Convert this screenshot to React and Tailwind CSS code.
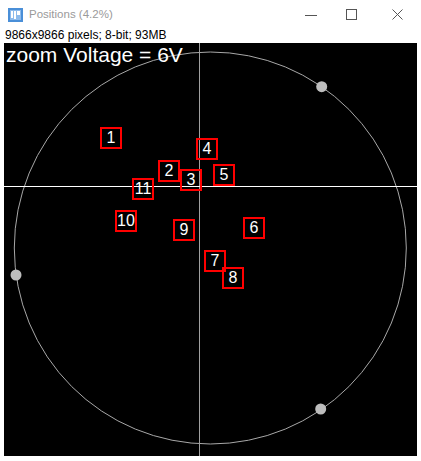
import React from 'react';

const ROIS = [
  { n: '1', x: 96, y: 84 },
  { n: '4', x: 192, y: 95 },
  { n: '2', x: 154, y: 117 },
  { n: '3', x: 176, y: 126 },
  { n: '5', x: 209, y: 121 },
  { n: '11', x: 128, y: 135 },
  { n: '10', x: 111, y: 167 },
  { n: '9', x: 169, y: 176 },
  { n: '6', x: 239, y: 174 },
  { n: '7', x: 200, y: 207 },
  { n: '8', x: 218, y: 224 },
];

function AppIcon() {
  return (
    <svg width="15" height="14" viewBox="0 0 15 14" className="shrink-0">
      <rect x="0" y="0" width="15" height="14" fill="#4a8fd8" />
      <rect x="2" y="2" width="11" height="10" fill="#8dbbec" />
      <rect x="3" y="3" width="2" height="7" fill="#ffffff" />
      <rect x="6" y="3" width="2" height="8" fill="#ffffff" />
      <rect x="9" y="3" width="3" height="4" fill="#ffffff" />
    </svg>
  );
}

function WindowControls() {
  return (
    <div className="ml-auto flex items-center h-full">
      <svg width="12" height="12" viewBox="0 0 12 12" className="mr-[29px]">
        <line x1="0" y1="6.5" x2="12" y2="6.5" stroke="#555" strokeWidth="1" />
      </svg>
      <svg width="11" height="11" viewBox="0 0 11 11" className="mr-[35px]">
        <rect x="0.5" y="0.5" width="10" height="10" fill="none" stroke="#555" strokeWidth="1" />
      </svg>
      <svg width="11" height="11" viewBox="0 0 11 11" className="mr-[18px]">
        <line x1="0.5" y1="0.5" x2="10.5" y2="10.5" stroke="#555" strokeWidth="1" />
        <line x1="10.5" y1="0.5" x2="0.5" y2="10.5" stroke="#555" strokeWidth="1" />
      </svg>
    </div>
  );
}

export default function App() {
  return (
    <div className="w-[421px] h-[461px] bg-white flex flex-col font-['Liberation_Sans',Arial,sans-serif] overflow-hidden">
      {/* title bar */}
      <div className="h-[28px] flex items-center pl-[8px] pt-[1px]">
        <AppIcon />
        <span className="ml-[6px] text-[11.5px] text-[#9a9a9a] leading-none">Positions (4.2%)</span>
        <WindowControls />
      </div>

      {/* info line */}
      <div className="h-[15px] pl-[5px] text-[12px] leading-[15px] text-black">
        9866x9866 pixels; 8-bit; 93MB
      </div>

      {/* image canvas */}
      <div className="ml-[4px] relative w-[413px] h-[413px] bg-black overflow-hidden">
        <svg width="413" height="413" viewBox="0 0 413 413" className="absolute inset-0">
          <circle cx="206.3" cy="205" r="196" fill="none" stroke="#a8a8a8" strokeWidth="1" />
          <line x1="195.5" y1="0" x2="195.5" y2="413" stroke="#a0a0a0" strokeWidth="1" />
          <line x1="0" y1="143.5" x2="413" y2="143.5" stroke="#ffffff" strokeWidth="1" />
          <circle cx="12" cy="232" r="5.5" fill="#bdbdbd" />
          <circle cx="317.7" cy="43.7" r="5.5" fill="#bdbdbd" />
          <circle cx="316.7" cy="366" r="5.5" fill="#bdbdbd" />
        </svg>

        <div className="absolute left-[2px] top-[1px] text-white text-[21px] leading-none whitespace-nowrap">
          zoom Voltage = 6V
        </div>

        {ROIS.map((r) => (
          <div
            key={r.n}
            className="absolute w-[22px] h-[22px] border-2 border-[#ff0000] flex items-center justify-center text-white text-[16px] leading-none"
            style={{ left: r.x, top: r.y }}
          >
            {r.n}
          </div>
        ))}
      </div>
    </div>
  );
}
